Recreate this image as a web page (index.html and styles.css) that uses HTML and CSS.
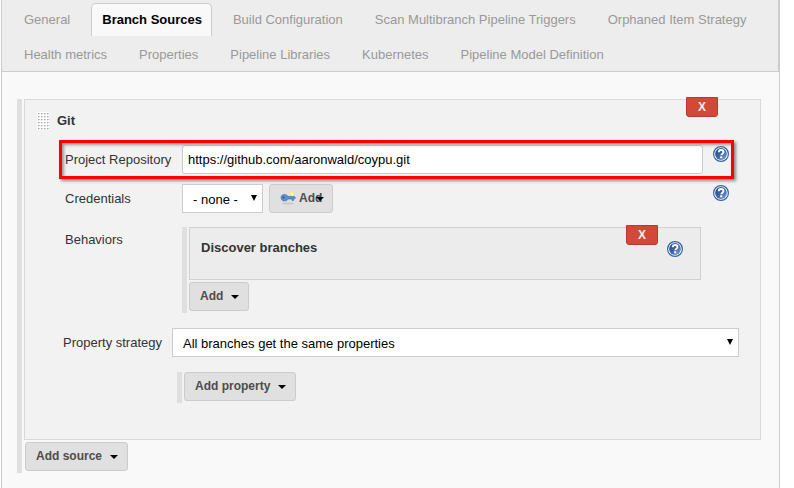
FILE: index.html
```html
<!DOCTYPE html>
<html lang="en">
<head>
<meta charset="utf-8">
<title>Branch Sources</title>
<link rel="stylesheet" href="styles.css">
</head>
<body>
<svg class="defs" aria-hidden="true">
  <defs>
    <linearGradient id="blue" x1="0" y1="0" x2="1" y2="1">
      <stop offset="0" stop-color="#1d4485"/>
      <stop offset=".5" stop-color="#3a66a8"/>
      <stop offset="1" stop-color="#7fa3d4"/>
    </linearGradient>
    <symbol id="help" viewBox="0 0 16 16">
      <circle cx="8" cy="8" r="7.400" fill="#fff" stroke="#34609f" stroke-width="1.200"/>
      <circle cx="8" cy="8" r="5.900" fill="url(#blue)"/>
      <path d="M5.700 6.200C5.800 4.600 6.800 4 8.100 4c1.400 0 2.400.8 2.400 2 0 1.700-2.200 1.700-2.200 3.300" fill="none" stroke="#fff" stroke-width="1.900"/>
      <rect x="7.200" y="10.300" width="2.100" height="2" fill="#fff"/>
    </symbol>
  </defs>
</svg>
<div class="config">
  <nav class="tabs">
    <a class="tab" href="#general">General</a>
    <a class="tab active" href="#sources">Branch Sources</a>
    <a class="tab" href="#build">Build Configuration</a>
    <a class="tab" href="#triggers">Scan Multibranch Pipeline Triggers</a>
    <a class="tab" href="#orphaned">Orphaned Item Strategy</a>
    <a class="tab" href="#health">Health metrics</a>
    <a class="tab" href="#properties">Properties</a>
    <a class="tab" href="#libraries">Pipeline Libraries</a>
    <a class="tab" href="#kubernetes">Kubernetes</a>
    <a class="tab" href="#model">Pipeline Model Definition</a>
  </nav>
  <main class="content" id="sources">
    <div class="list">
      <section class="panel source">
        <button class="remove" type="button">X</button>
        <header class="source-head">
          <svg class="grip" viewBox="0 0 12 18" aria-hidden="true">
            <defs>
              <pattern id="dots" width="3" height="3" patternUnits="userSpaceOnUse">
                <rect width="3" height="3" fill="#fff"/>
                <rect x="1" y="1" width="1" height="1" fill="#aaa"/>
                <rect x="2" y="1" width="1" height="1" fill="#ccc"/>
                <rect x="1" y="2" width="1" height="1" fill="#ddd"/>
              </pattern>
            </defs>
            <rect width="12" height="18" fill="url(#dots)"/>
          </svg>
          <h2 class="title">Git</h2>
        </header>
        <div class="fields">
          <div class="row marked">
            <label class="label" for="repo">Project Repository</label>
            <input class="text" id="repo" type="text" value="https://github.com/aaronwald/coypu.git">
            <a class="help" href="#help-repo" aria-label="Help"><svg><use href="#help"/></svg></a>
          </div>
          <div class="row">
            <label class="label" for="cred">Credentials</label>
            <div class="control">
              <span class="select short"><select id="cred"><option>- none -</option></select></span>
              <button class="button add-key" type="button">
                <svg class="key" viewBox="0 0 16 16" aria-hidden="true">
                  <ellipse cx="8" cy="13.500" rx="6" ry="1" fill="#c8c8c8"/>
                  <circle cx="12" cy="4" r="2.600" fill="#f4ef7c"/>
                  <circle cx="12" cy="4" r="1.200" fill="#fffcc0"/>
                  <path d="M1 7.500C1 5.500 2.500 4.500 4.500 4.500S7.500 5.500 8 6.500h6.500l1 1.200-1 1.300h-1v1.500h-1.500V9H8c-.5 1-1.500 2-3.500 2S1 9.500 1 7.500z" fill="#5d8fcb" stroke="#3f6da9" stroke-width=".6"/>
                  <circle cx="3.500" cy="7.500" r="1" fill="#2e568f"/>
                </svg>
                <span>Add</span><i class="caret"></i>
              </button>
            </div>
            <a class="help" href="#help-cred" aria-label="Help"><svg><use href="#help"/></svg></a>
          </div>
          <div class="row behaviors">
            <span class="label">Behaviors</span>
            <div class="list nested">
              <section class="panel trait">
                <button class="remove" type="button">X</button>
                <h3 class="title">Discover branches</h3>
                <a class="help" href="#help-branches" aria-label="Help"><svg><use href="#help"/></svg></a>
              </section>
              <button class="button" type="button">Add<i class="caret"></i></button>
            </div>
          </div>
        </div>
        <div class="strategy">
          <label class="label" for="strategy">Property strategy</label>
          <span class="select"><select id="strategy"><option>All branches get the same properties</option></select></span>
        </div>
        <div class="list property">
          <button class="button" type="button">Add property<i class="caret"></i></button>
        </div>
      </section>
      <button class="button add-source" type="button">Add source<i class="caret"></i></button>
    </div>
  </main>
</div>
</body>
</html>
```

FILE: styles.css
```css
* { box-sizing: border-box; }

body {
  margin: 0;
  background: #fff;
  color: #333;
  font: 13px/16px "Liberation Sans", Arial, sans-serif;
}

button, input, select { font: inherit; }
h2, h3 { margin: 0; }
.defs { position: absolute; width: 0; height: 0; }

.config {
  min-height: 100vh;
  margin: 0 14px 0 1px;
  border: solid #ccc;
  border-width: 0 1px;
  background: #f9f9f9;
}

.tabs {
  display: flex;
  flex-wrap: wrap;
  gap: 2px 10px;
  padding: 3px 10px 0 11px;
  background: #ededed;
  border-bottom: 1px solid #ccc;
  border-right: 1px solid #ccc;
}

.tab {
  padding: 8px 10px;
  border: 1px solid transparent;
  border-bottom: 0;
  border-radius: 5px 5px 0 0;
  color: #999;
  text-decoration: none;
}

.tab.active {
  padding-right: 9px;
  border-color: #ccc;
  background: #f9f9f9;
  color: #000;
  font-weight: bold;
}

.content { padding: 27px 18px 15px 15px; }

.list {
  border-left: 5px solid #dfdfdf;
  padding: 0 0 2px 2px;
}

.panel {
  position: relative;
  border: 1px solid #d9d9d9;
  background: #f2f2f2;
  margin-bottom: 2px;
}

.source { padding: 12px 0 36px; }
.add-source { margin-left: 1px; }

.source-head {
  display: flex;
  align-items: center;
  gap: 8px;
  padding-left: 12px;
}

.grip { width: 12px; height: 18px; }
.title { font-size: 13px; line-height: 16px; }

.remove {
  position: absolute;
  top: -3px;
  right: 42px;
  width: 32px;
  height: 20px;
  padding: 0;
  border: 1px solid #b93a2c;
  border-radius: 0 0 3px 3px;
  background: #d24939;
  color: #eee;
  font-size: 12px;
  font-weight: bold;
}

.fields {
  display: grid;
  gap: 10px;
  padding: 15px 31px 15px 40px;
}

.row { position: relative; display: flex; }
.row > .label { width: 117px; padding-top: 7px; flex: none; }

.marked::after {
  content: "";
  position: absolute;
  inset: -5px;
  left: -6px;
  border: 3px solid #f00;
  box-shadow: 2px 2px 3px #888, inset 2px 2px 3px #999;
  pointer-events: none;
}

.text {
  flex: 1;
  min-width: 0;
  height: 29px;
  padding: 0 5px;
  border: 1px solid #ccc;
  border-radius: 3px;
  background: #fff;
  color: #000;
}

.control { flex: 1; display: flex; gap: 6px; }
.help { flex: none; margin: 1px 0 0 10px; height: 16px; }
.help svg { display: block; width: 16px; height: 16px; }

.select { position: relative; flex: 1; }
.select.short { flex: none; width: 81px; }

.select select {
  appearance: none;
  display: block;
  width: 100%;
  height: 29px;
  padding: 3px 10px 0;
  border: 1px solid #ccc;
  border-radius: 0;
  background: #fff;
  color: #000;
}

.select::after {
  content: "";
  position: absolute;
  top: 11px;
  right: 6px;
  border: solid transparent;
  border-width: 6px 3px 0;
  border-top-color: #000;
  pointer-events: none;
}

.button {
  display: flex;
  align-items: center;
  height: 29px;
  padding: 0 9px 2px 10px;
  border: 1px solid #ccc;
  border-radius: 3px;
  background: #e0e0e0;
  color: #4d4d4d;
  font-size: 12px;
  font-weight: bold;
}

.caret {
  margin: 2px 0 0 8px;
  border: solid transparent;
  border-width: 4px 4px 0;
  border-top-color: #000;
}

.add-key .caret { margin-left: -6px; }
.add-key { width: 64px; }
.key { width: 16px; height: 16px; margin-right: 3px; flex: none; }

.behaviors { margin-top: 4px; padding-right: 28px; }
.row.behaviors > .label { padding-top: 5px; }
.nested { flex: 1; }

.trait {
  display: flex;
  justify-content: space-between;
  min-height: 53px;
  padding: 12px 17px 12px 11px;
  background: #ececec;
  border-color: #d0d0d0;
}

.strategy {
  display: flex;
  align-items: center;
  padding: 0 21px 15px 38px;
}
.strategy .label { width: 109px; }

.property { margin-left: 152px; }
```
